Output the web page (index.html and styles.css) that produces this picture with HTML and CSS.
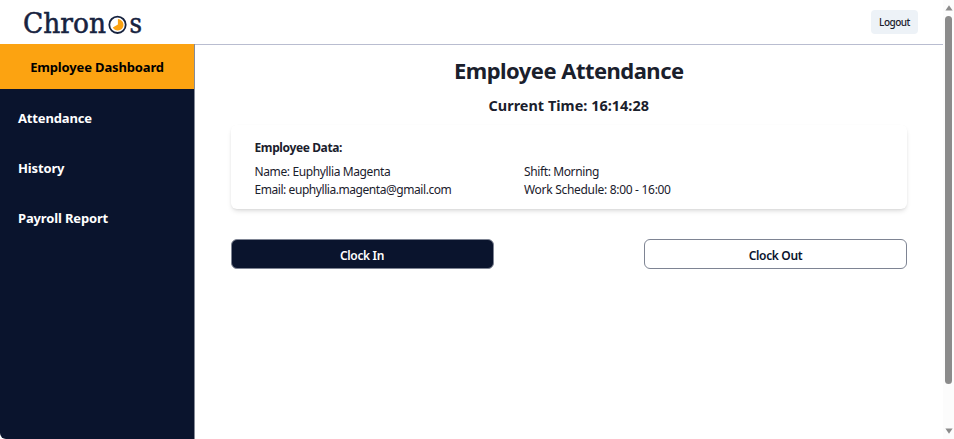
FILE: index.html
```html
<!DOCTYPE html>
<html lang="en">
<head>
<meta charset="utf-8">
<title>Chronos</title>
<link rel="stylesheet" href="styles.css">
</head>
<body>
<div class="window">
  <div class="page">
    <header class="topbar">
      <svg class="logo" width="122" height="34" viewBox="0 0 122 34" role="img" aria-label="Chronos">
        <text class="logo-text" x="2" y="27.5" textLength="83" lengthAdjust="spacingAndGlyphs">Chron</text>
        <circle cx="96.5" cy="19.8" r="8.2" fill="#fff" stroke="#17233f" stroke-width="1.8"/>
        <path d="M96.9 19.4V14.1A5.7 5.7 0 1 1 91.8 22.6Z" fill="#fca311"/>
        <text class="logo-text" x="108.5" y="27.5" textLength="12.5" lengthAdjust="spacingAndGlyphs">s</text>
      </svg>
      <button class="logout">Logout</button>
    </header>
    <div class="body">
      <nav class="sidebar">
        <div class="side-title">Employee Dashboard</div>
        <a class="side-link">Attendance</a>
        <a class="side-link">History</a>
        <a class="side-link">Payroll Report</a>
      </nav>
      <main class="content">
        <h1>Employee Attendance</h1>
        <p class="time">Current Time: 16:14:28</p>
        <section class="card">
          <h2>Employee Data:</h2>
          <div class="details">
            <div>Name: Euphyllia Magenta</div>
            <div>Shift: Morning</div>
            <div class="email">Email: euphyllia.magenta@gmail.com</div>
            <div class="schedule">Work Schedule: 8:00 - 16:00</div>
          </div>
        </section>
        <div class="actions">
          <button class="btn primary">Clock In</button>
          <button class="btn outline">Clock Out</button>
        </div>
      </main>
    </div>
  </div>
  <div class="scrollbar">
    <svg width="8" height="6" viewBox="0 0 8 6"><path d="M4 .3 7.6 5.6H.4Z" fill="#8b8b8b"/></svg>
    <div class="thumb"></div>
    <svg width="8" height="6" viewBox="0 0 8 6"><path d="M4 5.7.4.4H7.6Z" fill="#8b8b8b"/></svg>
  </div>
</div>
</body>
</html>
```
FILE: styles.css
```css
* { box-sizing: border-box; }
body {
  margin: 0;
  height: 439px;
  overflow: hidden;
  background: #fff;
  color: #1a202c;
  font-family: "Noto Sans", "Open Sans", sans-serif;
}
.window { display: flex; height: 439px; border-bottom-left-radius: 6px; overflow: hidden; }
.page { width: 943px; display: flex; flex-direction: column; }
.topbar {
  height: 45px;
  flex: none;
  display: flex;
  align-items: flex-start;
  justify-content: space-between;
  padding: 5px 25px 0 21px;
  border-bottom: 1px solid #b9bdd0;
}
.logo { display: block; }
.logo-text {
  font-family: "DejaVu Serif Condensed", "DejaVu Serif", serif;
  font-size: 28px;
  fill: #17233f;
  stroke: #17233f;
  stroke-width: .5px;
}
button { font-family: inherit; padding: 0; border: 0; white-space: nowrap; }
.logout {
  width: 47px;
  height: 24px;
  margin-top: 5px;
  border-radius: 4px;
  background: #edf2f7;
  color: #1a202c;
  font-size: 10px;
  font-weight: 500;
  letter-spacing: -.5px;
}
.body { display: flex; flex: 1; margin-top: -1px; }
.sidebar {
  width: 195px;
  background: #0a142d;
  border-right: 1px solid #858a96;
  color: #fff;
  font-weight: 700;
  font-size: 13px;
  letter-spacing: -.15px;
}
.side-title {
  height: 45px;
  display: flex;
  align-items: center;
  justify-content: center;
  background: #fca311;
  color: #000;
  margin-bottom: 4px;
}
.side-link { display: flex; align-items: center; height: 50px; padding-left: 18px; }
.content { flex: 1; padding: 11px 36px 0 36px; margin-left: -.5px; }
h1 { margin: 0; text-align: center; font-size: 22px; line-height: 30px; font-weight: 700; letter-spacing: -.53px; }
.time { margin: 11px 0 0; text-align: center; font-size: 14.4px; line-height: 20px; font-weight: 700; letter-spacing: .04px; }
.card {
  height: 84px;
  margin-top: 9px;
  padding: 14px 24px 0;
  border-radius: 6px;
  box-shadow: 0 3px 5px -1px rgba(0,0,0,.13), 0 1px 3px -1px rgba(0,0,0,.1);
}
h2 { margin: 0; font-size: 12px; line-height: 18px; font-weight: 700; letter-spacing: -.38px; }
.details {
  display: grid;
  grid-template-columns: 269.5px 1fr;
  margin-top: 6px;
  font-size: 12px;
  line-height: 18px;
  letter-spacing: -.38px;
  white-space: nowrap;
}
.email { letter-spacing: -.44px; }
.schedule { letter-spacing: -.3px; }
.actions { display: flex; justify-content: space-between; margin-top: 30px; }
.btn {
  width: 263px;
  height: 30px;
  padding-top: 2px;
  border: 1px solid #7e8493;
  border-radius: 6px;
  font-size: 12px;
  font-weight: 600;
  letter-spacing: -.35px;
}
.primary { background: #0a142d; color: #fff; }
.outline { background: #fff; color: #0a142d; }
.scrollbar {
  width: 11px;
  background: #fcfcfc;
  display: flex;
  flex-direction: column;
  align-items: center;
  padding: 5px 0;
}
.thumb { width: 7px; height: 368px; margin: 5px 0 auto; border-radius: 4px; background: #8b8b8b; }
```
